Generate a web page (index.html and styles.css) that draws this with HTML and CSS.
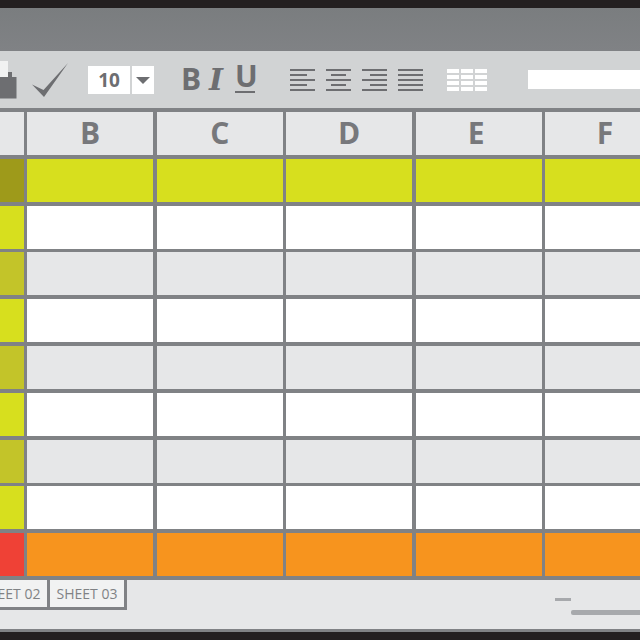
FILE: index.html
```html
<!DOCTYPE html>
<html lang="en">

<head>
    <meta charset="UTF-8">
    <title>Spreadsheet</title>
    <link rel="stylesheet" href="styles.css">
</head>

<body>
    <div class="window">
        <div class="title-bar"></div>

        <!-- toolbar -->
        <div class="toolbar">
            <svg class="icon-case" width="17" height="38" viewBox="0 0 17 38">
                <rect x="0" y="0" width="8" height="16" fill="#f1f2f2"/>
                <rect x="8" y="11" width="4" height="6" fill="#6d6e71"/>
                <rect x="0" y="16" width="16.5" height="21.5" fill="#6d6e71"/>
            </svg>
            <svg class="icon-check" width="37" height="36" viewBox="0 0 37 36">
                <path d="M0 21.5 L11.5 27 L36 0 L12 34 Z" fill="#6d6e71"/>
            </svg>
            <div class="size-box">
                <span class="size-value">10</span>
                <span class="size-arrow"><i></i></span>
            </div>
            <div class="format">
                <span class="fmt-b">B</span>
                <span class="fmt-i">I</span>
                <span class="fmt-u">U</span>
            </div>
            <div class="aligns">
                <div class="align left"><i></i><i></i><i></i><i></i><i></i></div>
                <div class="align center"><i></i><i></i><i></i><i></i><i></i></div>
                <div class="align right"><i></i><i></i><i></i><i></i><i></i></div>
                <div class="align"><i></i><i></i><i></i><i></i><i></i></div>
            </div>
            <div class="table-icon">
                <i></i><i></i><i></i><i></i><i></i><i></i><i></i><i></i><i></i><i></i><i></i><i></i>
            </div>
            <div class="formula"></div>
        </div>

        <!-- grid -->
        <div class="sheet">
            <div class="cell head"></div>
            <div class="cell head">B</div>
            <div class="cell head">C</div>
            <div class="cell head">D</div>
            <div class="cell head head-e">E</div>
            <div class="cell head">F</div>

            <div class="cell olive"></div>
            <div class="cell lime"></div><div class="cell lime"></div><div class="cell lime"></div><div class="cell lime"></div><div class="cell lime"></div>

            <div class="cell lime"></div>
            <div class="cell"></div><div class="cell"></div><div class="cell"></div><div class="cell"></div><div class="cell"></div>

            <div class="cell moss"></div>
            <div class="cell grey"></div><div class="cell grey"></div><div class="cell grey"></div><div class="cell grey"></div><div class="cell grey"></div>

            <div class="cell lime"></div>
            <div class="cell"></div><div class="cell"></div><div class="cell"></div><div class="cell"></div><div class="cell"></div>

            <div class="cell moss"></div>
            <div class="cell grey"></div><div class="cell grey"></div><div class="cell grey"></div><div class="cell grey"></div><div class="cell grey"></div>

            <div class="cell lime"></div>
            <div class="cell"></div><div class="cell"></div><div class="cell"></div><div class="cell"></div><div class="cell"></div>

            <div class="cell moss"></div>
            <div class="cell grey"></div><div class="cell grey"></div><div class="cell grey"></div><div class="cell grey"></div><div class="cell grey"></div>

            <div class="cell lime"></div>
            <div class="cell"></div><div class="cell"></div><div class="cell"></div><div class="cell"></div><div class="cell"></div>

            <div class="cell red"></div>
            <div class="cell orange"></div><div class="cell orange"></div><div class="cell orange"></div><div class="cell orange"></div><div class="cell orange"></div>
        </div>

        <!-- sheet tabs -->
        <div class="footer">
            <div class="tabs">
                <div class="tab">SHEET 02</div>
                <div class="tab">SHEET 03</div>
            </div>
            <div class="scroll">
                <div class="scroll-short"></div>
                <div class="scroll-long"></div>
            </div>
        </div>
    </div>
</body>

</html>
```

FILE: styles.css
```css
* {
    padding: 0;
    margin: 0;
    box-sizing: border-box;
}

html,
body {
    width: 640px;
    height: 640px;
    overflow: hidden;
}

.window {
    width: 640px;
    height: 640px;
    display: flex;
    flex-direction: column;
    overflow: hidden;
    background-color: #e6e7e8;
    border-top: 8px solid #231f20;
    border-bottom: 8px solid #231f20;
    font-family: "Open Sans", "Liberation Sans", sans-serif;
}

.title-bar {
    height: 43px;
    flex: none;
    background: linear-gradient(#7a7d7f, #808285);
}

/* toolbar */
.toolbar {
    height: 57px;
    flex: none;
    display: flex;
    align-items: flex-start;
    background-color: #d1d3d4;
}

.icon-case {
    flex: none;
    margin-top: 10px;
}

.icon-check {
    flex: none;
    margin: 12px 0 0 15px;
}

.size-box {
    flex: none;
    display: flex;
    gap: 2px;
    margin: 15px 0 0 19px;
    height: 28px;
}

.size-value {
    width: 42px;
    background-color: #fff;
    color: #6d6e71;
    font-size: 19px;
    font-weight: 700;
    line-height: 28px;
    text-align: center;
}

.size-arrow {
    width: 22px;
    background-color: #fff;
    display: flex;
    align-items: center;
    justify-content: center;
}

.size-arrow i {
    display: block;
    border-top: 7px solid #6d6e71;
    border-left: 7px solid transparent;
    border-right: 7px solid transparent;
}

.format {
    flex: none;
    width: 102px;
    display: flex;
    align-items: flex-start;
    margin-left: 27px;
    color: #6d6e71;
    font-size: 30px;
    line-height: 30px;
    font-weight: 700;
}

.fmt-b {
    width: 26px;
    margin-top: 13px;
}

.fmt-i {
    width: 18px;
    margin: 14px 10px 0 0;
    font-family: "DejaVu Serif", serif;
    font-style: italic;
    text-align: center;
}

.fmt-u {
    width: 20px;
    height: 32px;
    margin-top: 10px;
    text-align: center;
    border-bottom: 2px solid #6d6e71;
}

.aligns {
    flex: none;
    display: flex;
    gap: 11px;
    margin: 18px 0 0 7px;
}

.align {
    width: 25px;
    height: 22px;
    display: flex;
    flex-direction: column;
    justify-content: space-between;
    align-items: stretch;
}

.align i {
    display: block;
    height: 2px;
    background-color: #6d6e71;
}

.align.left i:nth-child(even) {
    margin-right: 8px;
}

.align.center i:nth-child(even) {
    margin: 0 5px;
}

.align.right i:nth-child(even) {
    margin-left: 8px;
}

.table-icon {
    flex: none;
    width: 40px;
    height: 22px;
    margin: 18px 0 0 24px;
    display: grid;
    grid-template-columns: repeat(3, 1fr);
    grid-template-rows: repeat(4, 1fr);
    gap: 2px;
}

.table-icon i {
    display: block;
    background-color: #fff;
}

.formula {
    flex: 1;
    height: 19px;
    margin: 19px 0 0 41px;
    background-color: #fff;
}

/* grid */
.sheet {
    flex: none;
    width: 665px;
    display: grid;
    grid-template-columns: 23.7px 126px 126px 126px 126px 119.5px;
    grid-template-rows: repeat(10, 43px);
    gap: 3.8px 3.5px;
    padding: 4px 0 3.8px;
    background-color: #808285;
}

.cell {
    background-color: #fff;
}

.head {
    background-color: #e6e7e8;
    color: #77787b;
    font-size: 30px;
    font-weight: 700;
    line-height: 42px;
    text-align: center;
}

.head-e {
    padding-right: 5px;
}

.grey {
    background-color: #e6e7e8;
}

.lime {
    background-color: #d7df1e;
}

.olive {
    background-color: #9e9a1a;
}

.moss {
    background-color: #c3c429;
}

.red {
    background-color: #ef4136;
}

.orange {
    background-color: #f7941e;
}

/* sheet tabs */
.footer {
    flex: 1;
    display: flex;
    justify-content: space-between;
    align-items: flex-start;
    border-bottom: 3.5px solid #808285;
}

.tabs {
    width: 127px;
    height: 30px;
    display: flex;
    justify-content: flex-end;
    gap: 3px;
    overflow: hidden;
    background-color: #808285;
    padding-right: 3px;
    padding-bottom: 3px;
}

.tab {
    flex: none;
    width: 74px;
    background-color: #f1f2f2;
    color: #808285;
    font-size: 14px;
    line-height: 27px;
    text-align: center;
}

.scroll {
    width: 85px;
    margin-top: 18px;
}

.scroll-short {
    width: 16px;
    height: 3px;
    background-color: #a7a9ac;
}

.scroll-long {
    height: 5px;
    margin: 9px 0 0 16px;
    border-radius: 2px 0 0 2px;
    background-color: #a7a9ac;
}
```
